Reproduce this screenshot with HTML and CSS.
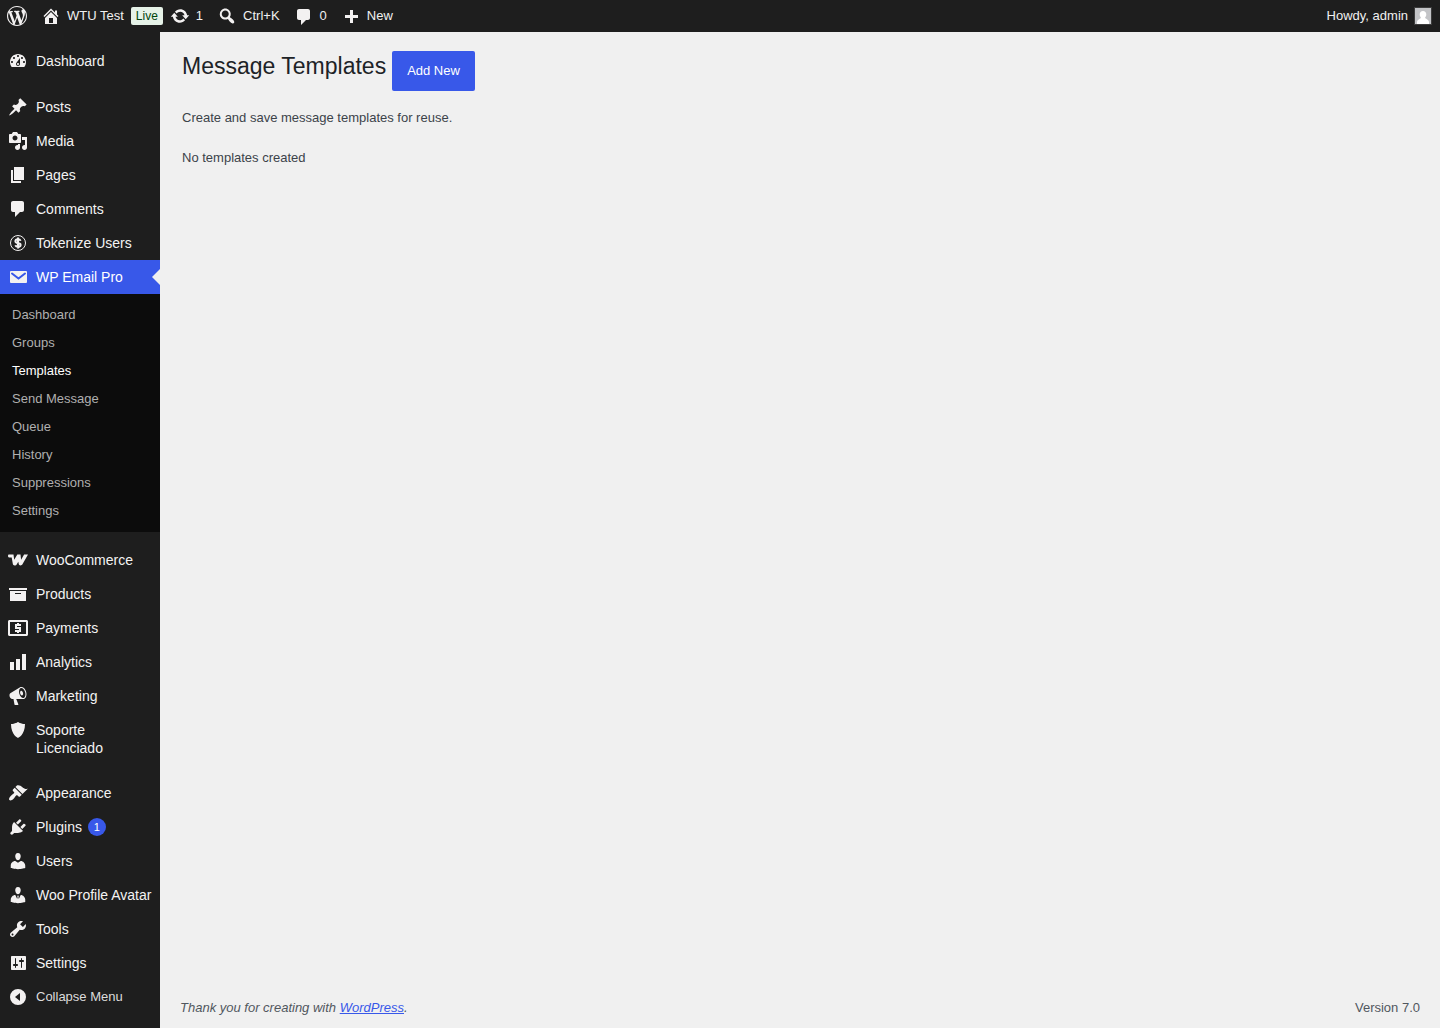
FILE: index.html
```html
<!DOCTYPE html>
<html lang="en">
<head>
    <meta charset="UTF-8">
    <meta name="viewport" content="width=device-width, initial-scale=1.0">
    <title>Message Templates</title>
    <link rel="stylesheet" href="styles.css">
</head>
<body>
    <header class="adminbar">
        <nav class="bar-links" aria-label="Toolbar">
            <a class="bar-item" href="#" aria-label="About WordPress"><svg class="icon" viewBox="0 0 20 20"><path d="M20 10c0-5.51-4.49-10-10-10C4.48 0 0 4.49 0 10c0 5.52 4.48 10 10 10 5.51 0 10-4.48 10-10zM7.78 15.37L4.37 6.22c.55-.02 1.17-.08 1.17-.08.5-.06.44-1.13-.06-1.11 0 0-1.45.11-2.37.11-.18 0-.37 0-.58-.01C4.12 2.69 6.87 1.11 10 1.11c2.33 0 4.45.87 6.05 2.34-.68-.11-1.65.39-1.65 1.58 0 .74.45 1.36.9 2.1.35.61.55 1.36.55 2.46 0 1.49-1.4 5-1.4 5l-3.03-8.37c.54-.02.82-.17.82-.17.5-.05.44-1.25-.06-1.22 0 0-1.44.12-2.38.12-.87 0-2.33-.12-2.33-.12-.5-.03-.56 1.2-.06 1.22l.92.08 1.26 3.41zM17.41 10c.24-.64.74-1.87.43-4.25.7 1.29 1.05 2.71 1.05 4.25 0 3.29-1.73 6.24-4.4 7.78.97-2.59 1.94-5.2 2.92-7.78zM6.1 18.09C3.12 16.65 1.11 13.53 1.11 10c0-1.3.23-2.48.72-3.59C3.25 10.3 4.67 14.2 6.1 18.09zm4.03-6.63l2.58 6.98c-.86.29-1.76.45-2.71.45-.79 0-1.57-.11-2.29-.33.81-2.38 1.62-4.74 2.42-7.1z"/></svg></a>
            <a class="bar-item" href="#"><svg class="icon" viewBox="0 0 20 20"><path d="M16 8.5l1.53 1.53-1.06 1.06L10 4.6l-6.47 6.49-1.06-1.06L10 2.5l4 4v-2h2v4zm-6-2.46l6 5.99V18H4v-5.97zM12 17v-5H8v5h4z"/></svg>WTU Test</a>
            <a class="live" href="#">Live</a>
            <a class="bar-item" href="#"><svg class="icon" viewBox="0 0 20 20"><path d="M10.2 3.28c3.53 0 6.43 2.61 6.92 6h2.08l-3.5 4-3.5-4h2.32c-.45-1.97-2.21-3.45-4.32-3.45-1.45 0-2.73.71-3.54 1.78L4.95 5.66C6.23 4.2 8.11 3.28 10.2 3.28zm-.4 13.44c-3.52 0-6.43-2.61-6.92-6H.8l3.5-4c1.17 1.33 2.33 2.67 3.5 4H5.48c.45 1.97 2.21 3.45 4.32 3.45 1.45 0 2.73-.71 3.54-1.78l1.71 1.95c-1.28 1.46-3.15 2.38-5.25 2.38z"/></svg>1</a>
            <a class="bar-item" href="#"><svg class="icon" viewBox="0 0 20 20"><path d="M12.14 4.18c1.87 1.87 2.11 4.75.72 6.89.12.1.22.21.36.31.2.16.47.36.81.59.34.24.56.39.66.47.42.31.73.57.94.78.32.32.6.65.84 1 .25.35.44.69.59 1.04.14.35.21.68.18 1-.02.32-.14.59-.36.81s-.49.34-.81.36c-.31.02-.65-.04-.99-.19-.35-.14-.7-.34-1.04-.59-.35-.24-.68-.52-1-.84-.21-.21-.47-.52-.77-.93-.1-.13-.25-.35-.47-.66-.22-.32-.4-.57-.56-.78-.16-.2-.29-.35-.44-.5-2.07 1.09-4.69.76-6.44-.98-2.14-2.15-2.14-5.64 0-7.78 2.15-2.15 5.63-2.15 7.78 0zm-1.41 6.36c1.36-1.37 1.36-3.58 0-4.95-1.37-1.37-3.59-1.37-4.95 0-1.37 1.37-1.37 3.58 0 4.95 1.36 1.37 3.58 1.37 4.95 0z"/></svg>Ctrl+K</a>
            <a class="bar-item" href="#"><svg class="icon" viewBox="0 0 20 20"><path d="M5 3h9c1.1 0 2 .9 2 2v7c0 1.1-.9 2-2 2h-2l-5 5v-5H5c-1.1 0-2-.9-2-2V5c0-1.1.9-2 2-2z"/></svg>0</a>
            <a class="bar-item" href="#"><svg class="icon" viewBox="0 0 20 20"><path d="M17 9v3h-5v5H9v-5H4V9h5V4h3v5z"/></svg>New</a>
        </nav>
        <a class="bar-item account" href="#">Howdy, admin
            <svg class="avatar" viewBox="0 0 16 16"><path fill="#c3c4c7" d="M0 0h16v16H0z"/><path fill="#fff" d="M8 3c2 0 3.3 1.5 3.3 3.5 0 1.3-.6 2.5-1.3 3.2.3 1 3.5 1.3 4 4.3v2H2v-2c.5-3 3.7-3.3 4-4.3-.7-.7-1.3-1.9-1.3-3.2C4.700 4.500 6 3 8 3z"/></svg>
        </a>
    </header>

    <div class="wrapper">
        <nav class="menu" aria-label="Main menu">
            <a class="menu-item" href="#"><svg class="icon" viewBox="0 0 20 20"><path fill-rule="evenodd" d="M3.76 16h12.48c1.1-1.37 1.76-3.11 1.76-5 0-4.42-3.58-8-8-8s-8 3.58-8 8c0 1.89.66 3.63 1.76 5zM10 4c.55 0 1 .45 1 1s-.45 1-1 1-1-.45-1-1 .45-1 1-1zM6 6c.55 0 1 .45 1 1s-.45 1-1 1-1-.45-1-1 .45-1 1-1zm8 0c.55 0 1 .45 1 1s-.45 1-1 1-1-.45-1-1 .45-1 1-1zM8.63 11.55L12 7v6c0 1.1-.9 2-2 2s-2-.9-2-2c0-.57.24-1.08.63-1.45zM4 10c.55 0 1 .45 1 1s-.45 1-1 1-1-.45-1-1 .45-1 1-1zm12 0c.55 0 1 .45 1 1s-.45 1-1 1-1-.45-1-1 .45-1 1-1zm-5 3c0-.55-.45-1-1-1s-1 .45-1 1 .45 1 1 1 1-.45 1-1z"/></svg>Dashboard</a>
            <hr class="separator">
            <a class="menu-item" href="#"><svg class="icon" viewBox="0 0 20 20"><path d="M10.44 3.02l1.82-1.82 6.36 6.35-1.83 1.82c-1.05-.68-2.48-.57-3.41.36l-.75.75c-.92.93-1.04 2.35-.35 3.41l-1.83 1.82-2.41-2.41-2.8 2.79c-.42.42-3.38 2.71-3.8 2.29s1.86-3.39 2.28-3.81l2.79-2.79L4.1 9.36l1.83-1.82c1.05.69 2.48.57 3.4-.36l.75-.75c.93-.92 1.05-2.35.36-3.41z"/></svg>Posts</a>
            <a class="menu-item" href="#"><svg class="icon" viewBox="0 0 20 20"><path fill-rule="evenodd" d="M13 11V4c0-.55-.45-1-1-1h-1.67L9 1H5L3.67 3H2c-.55 0-1 .45-1 1v7c0 .55.45 1 1 1h10c.55 0 1-.45 1-1zM7 4.5c1.38 0 2.5 1.12 2.5 2.5S8.38 9.5 7 9.5 4.5 8.38 4.5 7 5.62 4.5 7 4.5zM14 6h5v10.500c0 1.38-1.12 2.5-2.5 2.5S14 17.88 14 16.5s1.12-2.5 2.5-2.5c.17 0 .34.02.5.05V9h-3V6zm-4 8.05V13h2v3.5c0 1.38-1.12 2.5-2.5 2.5S7 17.88 7 16.5 8.12 14 9.5 14c.17 0 .34.02.5.05z"/></svg>Media</a>
            <a class="menu-item" href="#"><svg class="icon" viewBox="0 0 20 20"><path d="M6 15V2h10v13H6zm-1 1h8v2H3V5h2v11z"/></svg>Pages</a>
            <a class="menu-item" href="#"><svg class="icon" viewBox="0 0 20 20"><path d="M5 2h9c1.1 0 2 .9 2 2v7c0 1.1-.9 2-2 2h-2l-5 5v-5H5c-1.1 0-2-.9-2-2V4c0-1.1.9-2 2-2z"/></svg>Comments</a>
            <a class="menu-item" href="#"><svg class="icon" viewBox="0 0 20 20"><circle class="ring" cx="10" cy="10" r="7.5"/><path class="coin" d="M12.6 7.8C12.1 6.7 11 6.300 10 6.300c-1.500 0-2.600.7-2.600 1.900 0 2.700 5.200 1 5.200 3.700 0 1.200-1.200 1.800-2.600 1.800-1.200 0-2.200-.5-2.700-1.500M10 4.500v11"/></svg>Tokenize Users</a>
            <a class="menu-item current" href="#"><svg class="icon" viewBox="0 0 20 20"><rect x="2" y="4" width="17" height="12" rx="1"/><path class="flap" d="M4 6.500l6.500 5 6.500-5"/></svg>WP Email Pro</a>
            <div class="submenu">
                <a href="#">Dashboard</a>
                <a href="#">Groups</a>
                <a class="active" href="#">Templates</a>
                <a href="#">Send Message</a>
                <a href="#">Queue</a>
                <a href="#">History</a>
                <a href="#">Suppressions</a>
                <a href="#">Settings</a>
            </div>
            <hr class="separator short">
            <a class="menu-item" href="#"><svg class="icon" viewBox="0 0 20 20"><path d="M.6 4.500H5.500l.7 5.200L9.300 4.500h3.200l.6 5.200 3-5.200h3.900l-5.400 9.600c-.6 1-1.200 1.400-2.100 1.400-1 0-1.600-.6-1.800-1.700l-.4-2.100-1.500 2.500c-.6 1-1.200 1.300-2.100 1.300-1.100 0-1.700-.5-1.900-1.700L3.700 7.500H2C.8 7.500 0 7 0 6c0-.8.2-1.200.6-1.500z"/></svg>WooCommerce</a>
            <a class="menu-item" href="#"><svg class="icon" viewBox="0 0 20 20"><path fill-rule="evenodd" d="M19 4v2H1V4h18zM2 7h16v10H2V7zm11 3V9H7v1h6z"/></svg>Products</a>
            <a class="menu-item" href="#"><svg class="icon" viewBox="0 0 20 20"><path fill-rule="evenodd" d="M1.500 2h17c.8 0 1.500.7 1.500 1.500v13c0 .8-.7 1.500-1.500 1.500h-17C.7 18 0 17.300 0 16.500v-13C0 2.700.7 2 1.500 2zM2 4v12h16V4z"/><path class="bill" d="M13 7H8v3h4v3H7M10 5v2m0 6v2"/></svg>Payments</a>
            <a class="menu-item" href="#"><svg class="icon" viewBox="0 0 20 20"><path d="M18 18V2h-4v16h4zm-6 0V7H8v11h4zm-6 0v-8H2v8h4z"/></svg>Analytics</a>
            <a class="menu-item" href="#"><svg class="icon" viewBox="0 0 20 20"><path fill-rule="evenodd" d="M18.15 5.94c.46 1.62.38 3.22-.02 4.48-.42 1.28-1.26 2.18-2.3 2.48-.16.06-.26.06-.4.06-.06.02-.12.02-.18.02-.06.02-.14.02-.22.02h-6.8l2.22 5.5c.02.14-.06.26-.14.34-.08.1-.24.16-.34.16H6.95c-.1 0-.26-.06-.34-.16-.08-.08-.16-.2-.14-.34l-1-5.5H4.25l-.02-.02c-.5.06-1.08-.18-1.54-.62s-.88-1.08-1.06-1.88c-.24-.8-.2-1.56-.02-2.2.18-.62.58-1.08 1.06-1.3l.02-.02 9-5.4c.1-.06.18-.1.24-.16.06-.04.14-.08.24-.12.16-.08.28-.12.5-.18 1.04-.3 2.24.1 3.22.98s1.84 2.24 2.26 3.86zm-2.58 5.98h-.02c.4-.1.74-.34 1.04-.7.58-.7.86-1.76.86-3.04 0-.64-.1-1.3-.28-1.98-.34-1.36-1.02-2.5-1.78-3.24s-1.68-1.1-2.46-.88c-.82.22-1.4.96-1.7 2-.32 1.04-.28 2.36.06 3.72.38 1.36 1 2.5 1.8 3.24.78.74 1.62 1.1 2.48.88zm-2.54-7.08c.22-.04.42-.02.62.04.38.16.76.48 1.02 1s.42 1.2.42 1.78c0 .3-.04.56-.12.8-.18.48-.44.84-.86.94-.34.1-.8-.06-1.14-.4s-.64-.86-.78-1.5c-.18-.62-.12-1.24.02-1.72s.48-.84.82-.94z"/></svg>Marketing</a>
            <a class="menu-item" href="#"><svg class="icon" viewBox="0 0 20 20"><path d="M10 2s3 2 7 2c0 11-7 14-7 14S3 15 3 4c4 0 7-2 7-2z"/></svg>Soporte Licenciado</a>
            <hr class="separator short">
            <a class="menu-item" href="#"><svg class="icon" viewBox="0 0 20 20"><path d="M14.48 11.06L7.41 3.99l1.5-1.5c.5-.56 2.3-.47 3.51.32 1.21.8 1.43 1.28 2.91 2.1 1.18.64 2.45 1.26 4.45.85zm-.71.71L6.7 4.7 4.93 6.47c-.39.39-.39 1.02 0 1.41l1.06 1.06c.39.39.39 1.03 0 1.42-.6.6-1.43 1.11-2.21 1.69-.35.26-.7.53-1.01.84C1.43 14.23.4 16.08 1.4 17.07c.99 1 2.84-.03 4.18-1.36.31-.31.58-.66.85-1.02.57-.78 1.08-1.61 1.69-2.21.39-.39 1.02-.39 1.41 0l1.06 1.06c.39.39 1.02.39 1.41 0z"/></svg>Appearance</a>
            <a class="menu-item" href="#"><svg class="icon" viewBox="0 0 20 20"><path d="M13.11 4.36L9.87 7.6 8 5.73l3.24-3.24c.35-.34 1.05-.2 1.56.32.52.51.66 1.21.31 1.55zm-8 1.77l.91-1.12 9.01 9.01-1.19.84c-.71.71-2.63 1.16-3.82 1.16H6.14L4.9 17.26c-.59.59-1.54.59-2.12 0-.59-.58-.59-1.53 0-2.12l1.24-1.24v-3.88c0-1.13.4-3.19 1.09-3.89zm7.26 3.97l3.24-3.24c.34-.35 1.04-.21 1.55.31.52.51.66 1.21.31 1.55l-3.24 3.25z"/></svg>Plugins <span class="badge">1</span></a>
            <a class="menu-item" href="#"><svg class="icon" viewBox="0 0 20 20"><path d="M10 9.25c-2.27 0-2.73-3.44-2.73-3.44C7 4.02 7.82 2 9.97 2c2.16 0 2.98 2.02 2.71 3.81 0 0-.41 3.44-2.68 3.44zm0 2.57L12.72 10c2.39 0 4.52 2.33 4.52 4.53v2.49s-3.65 1.13-7.24 1.13c-3.65 0-7.24-1.13-7.24-1.13v-2.49c0-2.25 1.94-4.48 4.47-4.48z"/></svg>Users</a>
            <a class="menu-item" href="#"><svg class="icon" viewBox="0 0 20 20"><path d="M10 9.25c-2.27 0-2.73-3.44-2.73-3.44C7 4.02 7.82 2 9.97 2c2.16 0 2.98 2.02 2.71 3.81 0 0-.41 3.44-2.68 3.44zM7.3 10l1.9 4 .4-2-.6-1.3h2l-.6 1.3.4 2 1.9-4c2.4 0 4.54 2.33 4.54 4.53v2.49s-3.65 1.13-7.24 1.13c-3.65 0-7.24-1.13-7.24-1.13v-2.49c0-2.2 2-4.53 4.54-4.53z"/></svg>Woo Profile Avatar</a>
            <a class="menu-item" href="#"><svg class="icon" viewBox="0 0 20 20"><path fill-rule="evenodd" d="M16.68 9.77c-1.34 1.34-3.3 1.67-4.95.99l-5.41 6.52c-.99.99-2.59.99-3.58 0s-.99-2.59 0-3.57l6.52-5.42c-.68-1.65-.35-3.61.99-4.95 1.28-1.28 3.12-1.62 4.72-1.06l-2.89 2.89 2.82 2.82 2.86-2.87c.53 1.58.18 3.39-1.08 4.65zM3.81 16.21c.4.39 1.04.39 1.43 0 .4-.4.4-1.04 0-1.43-.39-.4-1.03-.4-1.43 0-.39.39-.39 1.03 0 1.43z"/></svg>Tools</a>
            <a class="menu-item" href="#"><svg class="icon" viewBox="0 0 20 20"><path fill-rule="evenodd" d="M18 16V4c0-.55-.45-1-1-1H4c-.55 0-1 .45-1 1v12c0 .55.45 1 1 1h13c.55 0 1-.45 1-1zM8 11h1c.55 0 1 .45 1 1s-.45 1-1 1H8v1.5c0 .28-.22.5-.5.5s-.5-.22-.5-.5V13H6c-.55 0-1-.45-1-1s.45-1 1-1h1V5.5c0-.28.22-.5.5-.5s.5.22.5.5V11zm5-2h-1c-.55 0-1-.45-1-1s.45-1 1-1h1V5.5c0-.28.22-.5.5-.5s.5.22.5.5V7h1c.55 0 1 .45 1 1s-.45 1-1 1h-1v5.5c0 .28-.22.5-.5.5s-.5-.22-.5-.5V9z"/></svg>Settings</a>
            <button class="menu-item collapse" type="button"><svg class="icon" viewBox="0 0 20 20"><path fill-rule="evenodd" d="M10 2a8 8 0 1 0 0 16 8 8 0 0 0 0-16zM12 6v8l-5-4z"/></svg>Collapse Menu</button>
        </nav>

        <div class="content">
            <main>
                <div class="page-title">
                    <h1>Message Templates</h1>
                    <a class="add-new" href="#">Add New</a>
                </div>
                <p>Create and save message templates for reuse.</p>
                <p>No templates created</p>
            </main>
            <footer>
                <em>Thank you for creating with <a href="#">WordPress</a>.</em>
                <span>Version 7.0</span>
            </footer>
        </div>
    </div>
</body>
</html>
```
FILE: styles.css
```css
* {
    box-sizing: border-box;
}

body {
    display: flex;
    flex-direction: column;
    min-height: 100vh;
    margin: 0;
    font-family: "Liberation Sans", Arial, sans-serif;
    font-size: 13px;
    line-height: 20px;
    color: #3c434a;
    background-color: #f0f0f0;
}

a {
    color: inherit;
    text-decoration: none;
}

.icon {
    flex: none;
    width: 20px;
    height: 20px;
    fill: #f3f1f1;
}

/* Top bar */
.adminbar {
    display: flex;
    justify-content: space-between;
    height: 32px;
    color: #f0f0f0;
    background-color: #1e1e1e;
}

.bar-links {
    display: flex;
    align-items: center;
}

.bar-item {
    display: flex;
    align-items: center;
    gap: 6px;
    padding: 0 7px;
}

.live {
    padding: 0 5px;
    font-size: 12px;
    line-height: 18px;
    color: #00450c;
    background-color: #e6f2e8;
    border-radius: 2px;
}

.account {
    padding-right: 8px;
}

.avatar {
    width: 18px;
    height: 18px;
    border: 1px solid #3c3c3c;
}

/* Left menu */
.wrapper {
    display: flex;
    flex: 1;
}

.menu {
    flex: none;
    width: 160px;
    padding-top: 12px;
    background-color: #1e1e1e;
}

.menu-item {
    display: flex;
    position: relative;
    gap: 8px;
    padding: 8px;
    font-size: 14px;
    line-height: 18px;
    color: #f3f3f3;
}

.menu-item .icon {
    margin: -1px 0;
}

.menu-item.current {
    color: #fff;
    background-color: #3858e9;
}

.menu-item.current::after {
    content: "";
    position: absolute;
    top: 9px;
    right: 0;
    border: 8px solid transparent;
    border-left: 0;
    border-right-color: #f0f0f0;
}

.ring,
.coin,
.bill {
    fill: none;
    stroke: #f3f1f1;
}

.coin,
.bill {
    stroke-width: 2;
}

.flap {
    fill: none;
    stroke: #3858e9;
    stroke-width: 2;
    stroke-linecap: round;
}

.separator {
    height: 12px;
    margin: 0;
    border: 0;
}

.separator.short {
    height: 11px;
}

.submenu {
    padding: 7px 0;
    background-color: #0c0c0c;
}

.submenu a {
    display: block;
    padding: 4px 12px;
    color: #b0b0b0;
}

.submenu a.active {
    color: #fff;
}

.badge {
    width: 18px;
    height: 18px;
    margin-left: -2px;
    font-size: 11px;
    text-align: center;
    color: #fff;
    background-color: #3858e9;
    border-radius: 9px;
}

.collapse {
    width: 100%;
    font-family: inherit;
    font-size: 13px;
    color: #dcdcdc;
    text-align: left;
    background: none;
    border: 0;
    cursor: pointer;
}

/* Page */
.content {
    display: flex;
    flex: 1;
    flex-direction: column;
    justify-content: space-between;
    padding: 19px 20px 10px;
}

main {
    padding-left: 2px;
}

.page-title {
    display: flex;
    align-items: flex-start;
    gap: 6px;
}

h1 {
    margin: 0;
    font-size: 23px;
    font-weight: 400;
    line-height: 30px;
    color: #1d2327;
}

.add-new {
    padding: 0 15px;
    line-height: 40px;
    color: #fff;
    background-color: #3858e9;
    border-radius: 2px;
}

p {
    margin: 17px 0 20px;
}

footer {
    display: flex;
    justify-content: space-between;
    color: #50575e;
}

footer a {
    color: #3858e9;
    text-decoration: underline;
}
```
